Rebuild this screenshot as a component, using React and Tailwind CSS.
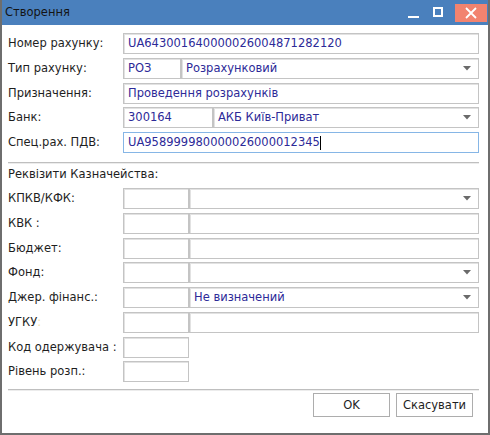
import React from 'react';

const font = { fontFamily: '"DejaVu Sans", Verdana, sans-serif' };

// Поле вводу (рамка як у WinForms)
const Field = ({ value = '', width, combo = false, focused = false, caret = false }) => (
    <div
        className={`h-full flex items-center pl-[4px] pr-[7px] bg-white border ${
            focused ? 'border-[#86b6e6]' : 'border-[#c4c4c4] shadow-[inset_1px_1px_0_#e2e2e2]'
        } ${width ? width : 'flex-1 min-w-0'}`}
    >
        <span className="flex-1 min-w-0 whitespace-nowrap text-[#2d2a98] flex items-center leading-[15px]">
            {value}
            {caret && <span className="inline-block w-px h-[14px] bg-black" />}
        </span>
        {combo && (
            <svg width="8" height="5" viewBox="0 0 8 5" className="shrink-0">
                <path d="M0 0 H8 L4 4.5 Z" fill="#6a6a6a" />
            </svg>
        )}
    </div>
);

const Row = ({ label, children }) => (
    <div className="flex items-center h-[21px]">
        <div className="w-[115px] shrink-0 text-[#1e1e1e] whitespace-nowrap leading-[15px]">{label}</div>
        <div className="flex-1 flex h-full">{children}</div>
    </div>
);

const Separator = ({ className = '' }) => (
    <div className={`flex flex-col ${className}`}>
        <div className="h-px bg-[#bfbfbf]" />
        <div className="h-px bg-[#ececec]" />
    </div>
);

const Button = ({ children }) => (
    <button className="w-[77px] h-[24px] border border-[#adadad] bg-white text-[#1e1e1e] flex items-center justify-center leading-[15px]">
        {children}
    </button>
);

export default function App() {
    return (
        <div
            className="w-[490px] h-[435px] bg-white flex flex-col border-x-2 border-b-2 border-[#6e6e6e] text-[11.5px]"
            style={font}
        >
            {/* Заголовок вікна */}
            <div className="h-[25px] shrink-0 bg-[#4a80bd] flex items-center pl-[3px]">
                <span className="flex-1 text-[#141414] leading-[15px]">Створення</span>
                <div className="w-[11px] h-[2px] bg-white mt-[9px] mr-[14px]" />
                <div className="w-[10px] h-[10px] border-2 border-white mr-[12px] -mt-[1px]" />
                <div className="w-[32px] h-[18px] bg-[#f2836f] flex items-center justify-center mr-[1px]">
                    <svg width="12" height="12" viewBox="0 0 12 12">
                        <path d="M1 1 L11 11 M11 1 L1 11" stroke="white" strokeWidth="1.8" />
                    </svg>
                </div>
            </div>

            {/* Тіло форми */}
            <div className="flex-1 flex flex-col pl-[6px] pr-[9px] pt-[8px]">
                <div className="flex flex-col gap-[3.75px]">
                    <Row label="Номер рахунку:">
                        <Field value="UA643001640000026004871282120" />
                    </Row>
                    <Row label="Тип рахунку:">
                        <Field value="РОЗ" width="w-[58px]" />
                        <Field value="Розрахунковий" combo />
                    </Row>
                    <Row label="Призначення:">
                        <Field value="Проведення розрахунків" />
                    </Row>
                    <Row label="Банк:">
                        <Field value="300164" width="w-[90px]" />
                        <Field value="АКБ Київ-Приват" combo />
                    </Row>
                    <Row label="Спец.рах. ПДВ:">
                        <Field value="UA958999980000026000012345" focused caret />
                    </Row>
                </div>

                <Separator className="mt-[9px]" />

                <div className="h-[16px] mt-[2px] flex items-center text-[#1e1e1e] leading-[15px]">Реквізити Казначейства:</div>

                <div className="flex flex-col gap-[3.75px] mt-[6px]">
                    <Row label="КПКВ/КФК:">
                        <Field width="w-[66px]" />
                        <Field combo />
                    </Row>
                    <Row label="КВК :">
                        <Field width="w-[66px]" />
                        <Field />
                    </Row>
                    <Row label="Бюджет:">
                        <Field width="w-[66px]" />
                        <Field />
                    </Row>
                    <Row label="Фонд:">
                        <Field width="w-[66px]" />
                        <Field combo />
                    </Row>
                    <Row label="Джер. фінанс.:">
                        <Field width="w-[66px]" />
                        <Field value="Не визначений" combo />
                    </Row>
                    <Row label={<>УГКУ<span className="text-[#f1dfae]">:</span></>}>
                        <Field width="w-[66px]" />
                        <Field />
                    </Row>
                    <Row label="Код одержувача :">
                        <Field width="w-[66px]" />
                    </Row>
                    <Row label="Рівень розп.:">
                        <Field width="w-[66px]" />
                    </Row>
                </div>

                <Separator className="mt-[7px]" />

                {/* Кнопки */}
                <div className="flex justify-end gap-[6px] pr-[6px] mt-[2px]">
                    <Button>OK</Button>
                    <Button>Скасувати</Button>
                </div>
            </div>
        </div>
    );
}
